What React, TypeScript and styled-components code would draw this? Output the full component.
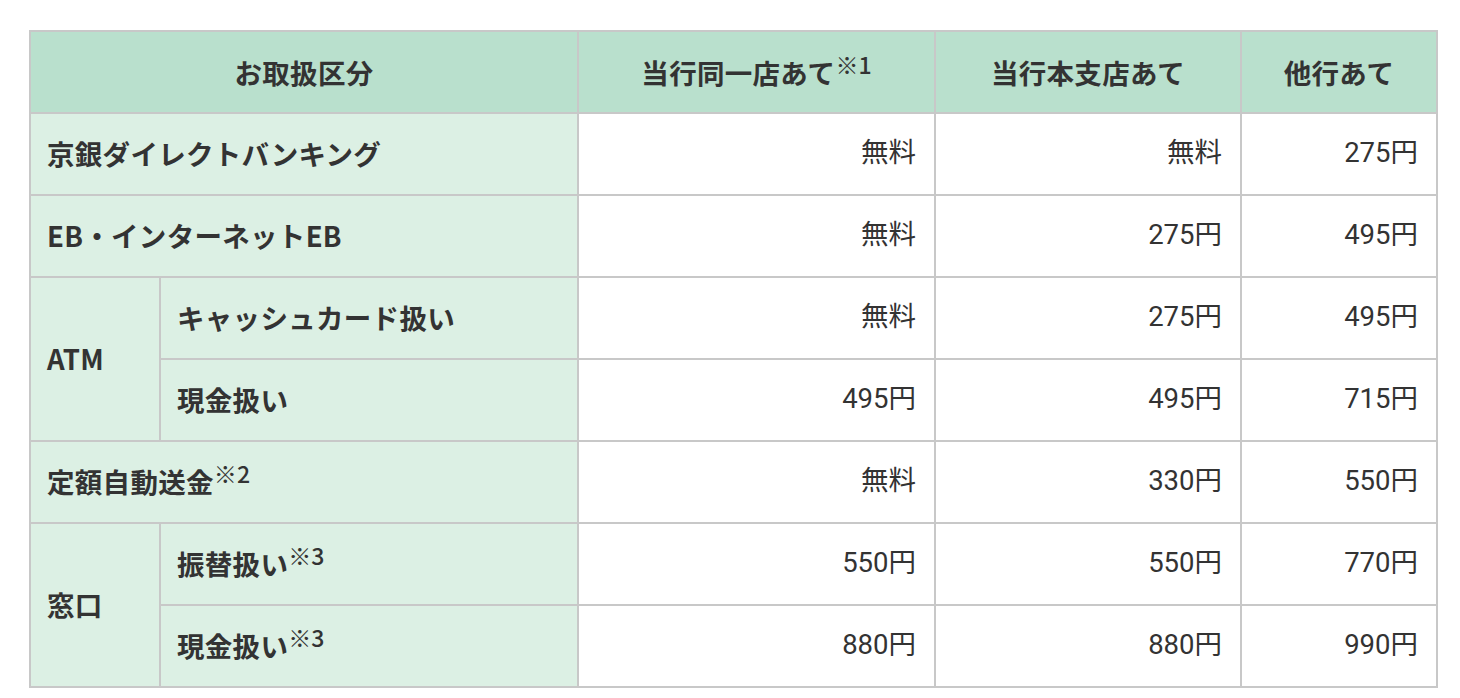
import styled, { createGlobalStyle } from "styled-components";

const GlobalStyle = createGlobalStyle`
  body {
    margin: 0;
    background: #ffffff;
    font-family: "Noto Sans CJK JP", "Noto Sans", sans-serif;
    color: #333333;
  }
`;

const Wrapper = styled.div`
  padding: 30px 0 0 29px;
`;

const Table = styled.table`
  border-collapse: collapse;
  table-layout: fixed;
  width: 1407px;
  font-size: 27.5px;
  line-height: 1.4;
`;

const Head = styled.th`
  height: 80px;
  padding: 0 16px;
  border: 2px solid #c8c8c8;
  background: #b9e0cd;
  font-weight: 700;
  letter-spacing: 0.3px;
  text-align: center;
  vertical-align: middle;
`;

const RowHead = styled.th`
  height: 78px;
  padding: 0 16px 2px;
  border: 2px solid #c8c8c8;
  background: #dcf0e4;
  font-weight: 700;
  letter-spacing: 0.3px;
  text-align: left;
  vertical-align: middle;
  white-space: nowrap;
`;

const Cell = styled.td`
  height: 78px;
  padding: 0 18px 2px;
  border: 2px solid #c8c8c8;
  background: #ffffff;
  font-family: Roboto, "Noto Sans CJK JP", sans-serif;
  font-weight: 400;
  text-align: right;
  vertical-align: middle;
`;

const Note = styled.sup`
  font-size: 0.84em;
  font-weight: 500;
  letter-spacing: 0;
  vertical-align: 0;
  position: relative;
  top: -0.42em;
`;

type Row = {
  label: string;
  note?: string;
  group?: string;
  groupSpan?: number;
  fees: string[];
};

const rows: Row[] = [
  { label: "京銀ダイレクトバンキング", fees: ["無料", "無料", "275円"] },
  { label: "EB・インターネットEB", fees: ["無料", "275円", "495円"] },
  { group: "ATM", groupSpan: 2, label: "キャッシュカード扱い", fees: ["無料", "275円", "495円"] },
  { label: "現金扱い", fees: ["495円", "495円", "715円"] },
  { label: "定額自動送金", note: "※2", fees: ["無料", "330円", "550円"] },
  { group: "窓口", groupSpan: 2, label: "振替扱い", note: "※3", fees: ["550円", "550円", "770円"] },
  { label: "現金扱い", note: "※3", fees: ["880円", "880円", "990円"] },
];

// rows that sit under a rowspan group get only the sub-label cell
const subRows = new Set([3, 6]);

export default function App() {
  return (
    <>
      <GlobalStyle />
      <Wrapper>
        <Table>
          <colgroup>
            <col style={{ width: 130 }} />
            <col style={{ width: 418 }} />
            <col style={{ width: 357 }} />
            <col style={{ width: 306 }} />
            <col style={{ width: 196 }} />
          </colgroup>
          <thead>
            <tr>
              <Head colSpan={2}>お取扱区分</Head>
              <Head>
                当行同一店あて<Note>※1</Note>
              </Head>
              <Head>当行本支店あて</Head>
              <Head>他行あて</Head>
            </tr>
          </thead>
          <tbody>
            {rows.map((row, i) => {
              const label = (
                <>
                  {row.label}
                  {row.note && <Note>{row.note}</Note>}
                </>
              );
              return (
                <tr key={i}>
                  {row.group && <RowHead rowSpan={row.groupSpan}>{row.group}</RowHead>}
                  {row.group || subRows.has(i) ? (
                    <RowHead>{label}</RowHead>
                  ) : (
                    <RowHead colSpan={2}>{label}</RowHead>
                  )}
                  {row.fees.map((fee, j) => (
                    <Cell key={j}>{fee}</Cell>
                  ))}
                </tr>
              );
            })}
          </tbody>
        </Table>
      </Wrapper>
    </>
  );
}
